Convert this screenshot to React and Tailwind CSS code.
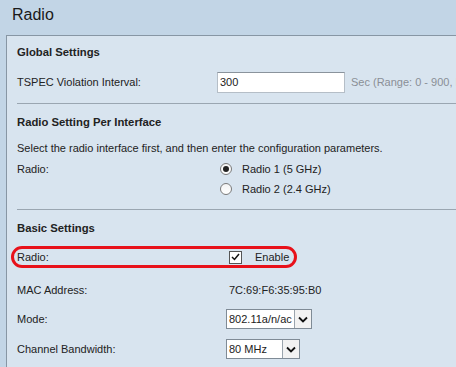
import React from 'react'

function Label({ children }) {
  return <div className="w-[200px] shrink-0">{children}</div>
}

function Radio({ checked, label }) {
  return (
    <div className="flex h-[20px] items-center">
      <span className="ml-[3px] flex h-[12px] w-[12px] items-center justify-center rounded-full border border-[#7a7a7a] bg-gradient-to-b from-[#f4f4f4] to-white">
        {checked && <span className="h-[6px] w-[6px] rounded-full bg-[#222]" />}
      </span>
      <span className="ml-[10px]">{label}</span>
    </div>
  )
}

function Select({ value, width }) {
  return (
    <div className={`ml-[9px] flex h-[20px] shrink-0 border border-[#7f8b96] bg-white ${width}`}>
      <span className="flex flex-1 items-center overflow-hidden whitespace-nowrap pl-[2px]">{value}</span>
      <span className="flex w-[17px] shrink-0 items-center justify-center border-l border-[#9aa4ad] bg-[#f2f2f2]">
        <svg width="10" height="7" viewBox="0 0 10 7">
          <path d="M1 1.5 L5 5.5 L9 1.5" fill="none" stroke="#111" strokeWidth="1.8" />
        </svg>
      </span>
    </div>
  )
}

export default function App() {
  return (
    <div className="h-[367px] w-[456px] overflow-hidden bg-[#c2d5e6] text-[11px] text-[#222]" style={{ fontFamily: '"Liberation Sans", Arial, sans-serif' }}>
      <div className="h-[35px] pl-[12px] pt-[6px] text-[16px] leading-[18px] text-[#1a1a1a]">Radio</div>
      <div className="ml-[6px] h-full border-l border-t border-[#8796a4] bg-[#d8e4ef] pl-[10px] pt-[6px]">
        <div className="flex h-[20px] items-center text-[11.3px] font-bold">Global Settings</div>
        <div className="mt-[10px] flex h-[21px] items-center">
          <Label>TSPEC Violation Interval:</Label>
          <div className="flex h-[21px] w-[128px] shrink-0 items-center border border-[#b5bec7] border-t-[#8a939c] bg-white pl-[2px]">300</div>
          <span className="ml-[6px] shrink-0 whitespace-nowrap text-[#8a8f96]">Sec (Range: 0 - 900, Default: 300)</span>
        </div>
        <div className="mt-[10px] border-t border-[#9aa6b1]" />

        <div className="mt-[8px] flex h-[20px] items-center text-[11.3px] font-bold">Radio Setting Per Interface</div>
        <div className="mt-[7px] flex h-[18px] items-center whitespace-nowrap">Select the radio interface first, and then enter the configuration parameters.</div>
        <div className="mt-[2px] flex">
          <div className="flex h-[20px] w-[200px] items-center">Radio:</div>
          <div className="flex flex-col">
            <Radio checked label="Radio 1 (5 GHz)" />
            <Radio label="Radio 2 (2.4 GHz)" />
          </div>
        </div>
        <div className="mt-[10px] border-t border-[#9aa6b1]" />

        <div className="mt-[8px] flex h-[20px] items-center text-[11.3px] font-bold">Basic Settings</div>
        <div className="relative mt-[8px] flex h-[22px] items-center">
          <Label>Radio:</Label>
          <span className="ml-[12px] flex h-[13px] w-[13px] items-center justify-center border border-[#555] bg-white">
            <svg width="9" height="8" viewBox="0 0 9 8">
              <path d="M1 4 L3.5 6.5 L8 1" fill="none" stroke="#111" strokeWidth="1.5" />
            </svg>
          </span>
          <span className="ml-[13px]">Enable</span>
          <div className="pointer-events-none absolute left-[-6px] top-0 h-[22px] w-[286px] rounded-[11px] border-[3px] border-[#e8111a]" />
        </div>
        <div className="mt-[12px] flex h-[20px] items-center">
          <Label>MAC Address:</Label>
          <span className="ml-[12px]">7C:69:F6:35:95:B0</span>
        </div>
        <div className="mt-[9px] flex h-[20px] items-center">
          <Label>Mode:</Label>
          <Select value="802.11a/n/ac" width="w-[86px]" />
        </div>
        <div className="mt-[10px] flex h-[20px] items-center">
          <Label>Channel Bandwidth:</Label>
          <Select value="80 MHz" width="w-[74px]" />
        </div>
      </div>
    </div>
  )
}
